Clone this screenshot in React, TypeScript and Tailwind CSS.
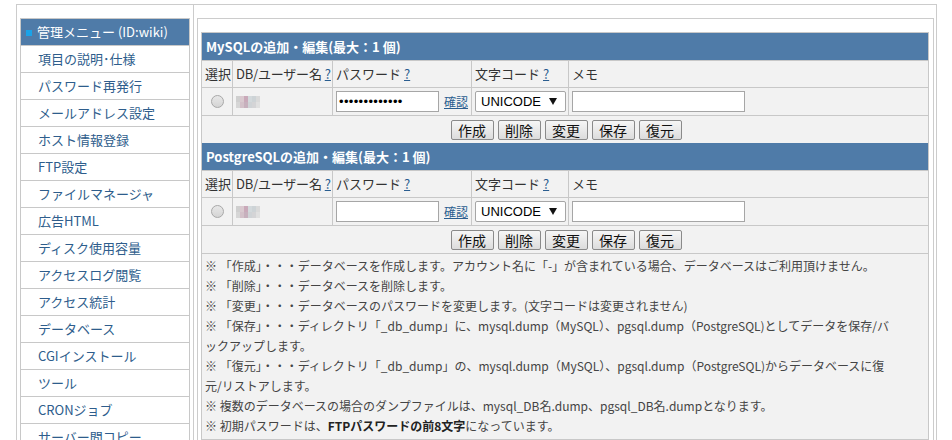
import React from "react";

const menu = [
  "項目の説明･仕様",
  "パスワード再発行",
  "メールアドレス設定",
  "ホスト情報登録",
  "FTP設定",
  "ファイルマネージャ",
  "広告HTML",
  "ディスク使用容量",
  "アクセスログ閲覧",
  "アクセス統計",
  "データベース",
  "CGIインストール",
  "ツール",
  "CRONジョブ",
  "サーバー間コピー",
];

const notes: React.ReactNode[] = [
  "※ 「作成」・・・データベースを作成します。アカウント名に「-」が含まれている場合、データベースはご利用頂けません。",
  "※ 「削除」・・・データベースを削除します。",
  "※ 「変更」・・・データベースのパスワードを変更します。(文字コードは変更されません)",
  "※ 「保存」・・・ディレクトリ「_db_dump」に、mysql.dump（MySQL）、pgsql.dump（PostgreSQL)としてデータを保存/バ",
  "ックアップします。",
  "※ 「復元」・・・ディレクトリ「_db_dump」の、mysql.dump（MySQL）、pgsql.dump（PostgreSQL)からデータベースに復",
  "元/リストアします。",
  "※ 複数のデータベースの場合のダンプファイルは、mysql_DB名.dump、pgsql_DB名.dumpとなります。",
  <>
    ※ 初期パスワードは、<b className="font-bold text-[#222]">FTPパスワードの前8文字</b>になっています。
  </>,
];

function Q() {
  return <span className="ml-[3px] underline text-[#2a5d8f]">?</span>;
}

function Cell({ children, last, center }: { children?: React.ReactNode; last?: boolean; center?: boolean }) {
  return (
    <div
      className={
        (last ? "" : "border-r border-[#c8c8c8] ") +
        "flex items-center whitespace-nowrap " +
        (center ? "justify-center" : "pl-[3px]")
      }
    >
      {children}
    </div>
  );
}

function Blur() {
  const cols = ["#cfcfcf", "#d9c9cf", "#c9a9b9", "#d3d9dc", "#cdd3d6", "#dadada"];
  const cols2 = ["#d6d6d6", "#d3c1c9", "#c7b0bd", "#cfd3d6", "#d4d4d6", "#e0e0e0"];
  return (
    <div className="flex flex-col">
      <div className="flex">
        {cols.map((c, i) => (
          <div key={i} className="w-[4px] h-[6px]" style={{ background: c }} />
        ))}
      </div>
      <div className="flex">
        {cols2.map((c, i) => (
          <div key={i} className="w-[4px] h-[6px]" style={{ background: c }} />
        ))}
      </div>
    </div>
  );
}

function Btn({ label }: { label: string }) {
  return (
    <div className="w-[43px] h-[20px] border border-[#8a8a8a] rounded-[2px] bg-gradient-to-b from-[#f6f6f6] to-[#dcdcdc] flex items-center justify-center text-[14px] text-[#111] leading-none">
      {label}
    </div>
  );
}

function Section({ title, pw }: { title: string; pw: boolean }) {
  return (
    <>
      <div className="h-[27px] bg-[#4f7ba8] text-white font-bold text-[13px] flex items-center pl-[4px]">
        {title}
      </div>
      <div className="grid grid-cols-[31px_100px_139px_97px_1fr] h-[27px] border-t border-[#c8c8c8] text-[13px] text-[#333]">
        <Cell>選択</Cell>
        <Cell>
          <span className="tracking-[-0.2px]">DB/ユーザー名</span>
          <Q />
        </Cell>
        <Cell>
          パスワード
          <Q />
        </Cell>
        <Cell>
          文字コード
          <Q />
        </Cell>
        <Cell last>メモ</Cell>
      </div>
      <div className="grid grid-cols-[31px_100px_139px_97px_1fr] h-[28px] border-t border-[#c8c8c8]">
        <Cell center>
          <div className="w-[13px] h-[13px] rounded-full border border-[#a8a8a8] bg-gradient-to-b from-[#e8e8e8] to-[#d4d4d4]" />
        </Cell>
        <Cell>
          <Blur />
        </Cell>
        <Cell>
          <div className="w-[103px] h-[21px] border border-[#a6a6a6] bg-white flex items-center pl-[2px] font-['Liberation_Sans',sans-serif] text-[13px] tracking-[0.35px] text-black">
            {pw ? "•••••••••••••" : ""}
          </div>
          <span className="ml-[5px] text-[12px] underline text-[#2a5d8f]">確認</span>
        </Cell>
        <Cell>
          <div className="w-[91px] h-[21px] border border-[#a6a6a6] rounded-[2px] bg-white flex items-center pl-[5px] font-['Liberation_Sans',sans-serif] text-[13px] text-black">
            UNICODE
            <svg className="ml-[8px]" width="8" height="7" viewBox="0 0 8 7">
              <polygon points="0,0 8,0 4,7" fill="#111" />
            </svg>
          </div>
        </Cell>
        <Cell last>
          <div className="w-[173px] h-[21px] border border-[#a6a6a6] bg-white" />
        </Cell>
      </div>
      <div className="h-[28px] border-t border-[#c8c8c8] flex items-center justify-center gap-[4px] pl-[2px]">
        <Btn label="作成" />
        <Btn label="削除" />
        <Btn label="変更" />
        <Btn label="保存" />
        <Btn label="復元" />
      </div>
    </>
  );
}

export default function App() {
  return (
    <div className="w-[952px] h-[440px] overflow-hidden bg-white font-['Noto_Sans_CJK_JP',sans-serif]">
      <div className="ml-[16px] mt-[4px] w-[921px] border border-[#cccccc] flex">
        {/* left column */}
        <div className="w-[177px] border-r border-[#cccccc] pl-[3px] pr-[3px] pt-[13px]">
          <div className="w-[170px] border border-[#c8c8c8]">
            <div className="h-[26px] bg-[#4f7ba8] flex items-center pl-[5px] text-white text-[13px]">
              <span className="w-[6px] h-[6px] bg-[#1aa3e8] mr-[5px] mt-[2px]" />
              管理メニュー (ID:wiki)
            </div>
            {menu.map((m) => (
              <div
                key={m}
                className="h-[27px] border-t border-[#c8c8c8] bg-white flex items-center pl-[17px] text-[13px] text-[#2e5d8c]"
              >
                {m}
              </div>
            ))}
          </div>
        </div>
        {/* right column */}
        <div className="flex-1 pl-[3px] pr-[2px] pt-[13px]">
          <div className="border border-[#cccccc] pl-[3px] pr-[4px] pt-[13px]">
            <div className="border border-[#c8c8c8] bg-[#f2f2f2]">
              <Section title="MySQLの追加・編集(最大：1 個)" pw={true} />
              <Section title="PostgreSQLの追加・編集(最大：1 個)" pw={false} />
              <div className="border-t border-[#c8c8c8] pt-[2px] pb-[3px] pl-[3px] text-[12px] leading-[20px] text-[#444]">
                {notes.map((n, i) => (
                  <div key={i} className="whitespace-nowrap">
                    {n}
                  </div>
                ))}
              </div>
            </div>
          </div>
        </div>
      </div>
    </div>
  );
}
